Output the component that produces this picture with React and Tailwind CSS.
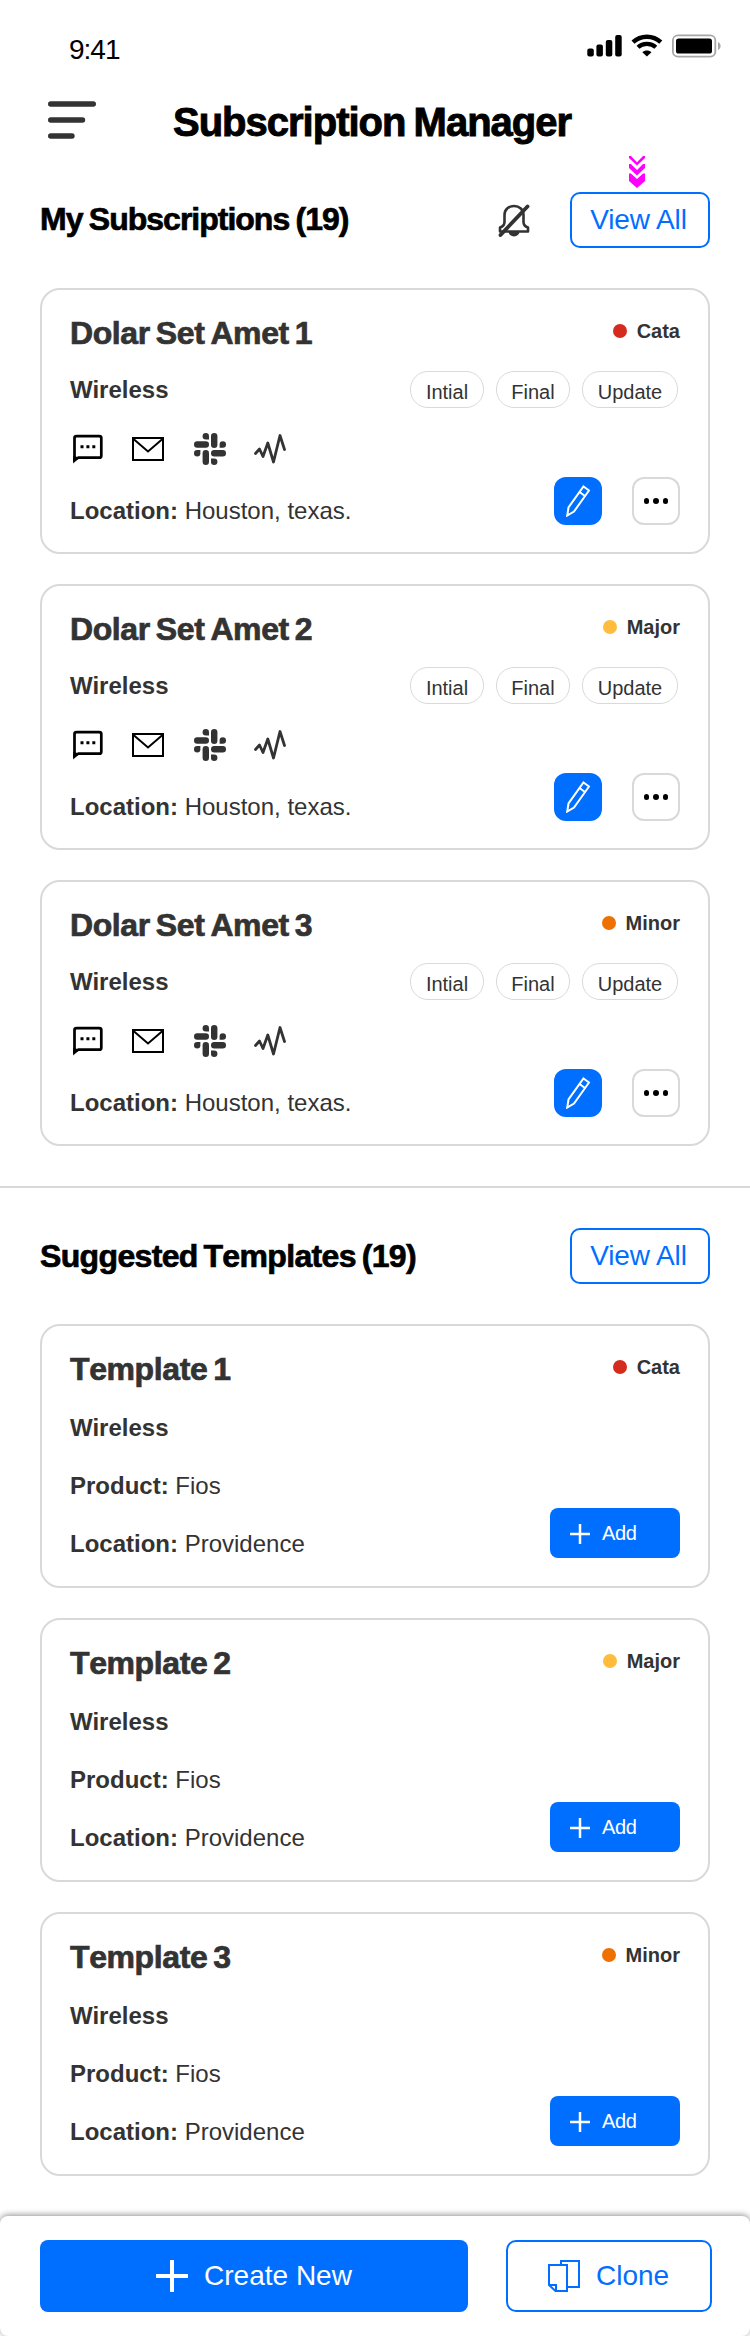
const subscriptions = [
  { title: "Dolar Set Amet 1", label: "Cata", dot: "bg-[#d52b1e]" },
  { title: "Dolar Set Amet 2", label: "Major", dot: "bg-[#ffbc3d]" },
  { title: "Dolar Set Amet 3", label: "Minor", dot: "bg-[#ed7000]" },
];

const templates = [
  { title: "Template 1", label: "Cata", dot: "bg-[#d52b1e]" },
  { title: "Template 2", label: "Major", dot: "bg-[#ffbc3d]" },
  { title: "Template 3", label: "Minor", dot: "bg-[#ed7000]" },
];

function StatusIcons() {
  return (
    <svg className="w-[136px] h-6" viewBox="0 0 136 24" fill="none">
      <rect x="0.3" y="14.6" width="6.5" height="8" rx="2" fill="#000" />
      <rect x="9.4" y="10.6" width="6.5" height="12" rx="2" fill="#000" />
      <rect x="18.8" y="6" width="6.5" height="16.6" rx="2" fill="#000" />
      <rect x="28.2" y="1" width="6.5" height="21.6" rx="2" fill="#000" />
      <path d="M46 8.200C53.800 0.900 66 0.900 73.800 8.200" stroke="#000" strokeWidth="4.4" />
      <path d="M51 13.200C55.600 8.800 64.200 8.800 68.800 13.200" stroke="#000" strokeWidth="4.2" />
      <path d="M59.900 22.600L55.300 18.200C57.800 15.800 62 15.800 64.500 18.200Z" fill="#000" />
      <rect x="85.9" y="1.300" width="42.4" height="21.4" rx="5" stroke="#a6a6a6" strokeWidth="1.8" />
      <rect x="89" y="4.500" width="36" height="15" rx="2.6" fill="#000" />
      <path d="M131 8v8c1.600-.7 2.600-2.200 2.600-4s-1-3.300-2.600-4z" fill="#a6a6a6" />
    </svg>
  );
}

function BellOff() {
  return (
    <svg className="w-8 h-[34px]" viewBox="0 0 32 34" fill="none" stroke="#333" strokeWidth="2.6">
      <path d="M6.500 19V12C6.500 6.500 10.500 3 16 3s9.500 3.500 9.500 9v7Q25.500 23 30 24.500v4H2v-4Q6.500 23 6.500 19z" strokeLinejoin="round" />
      <path d="M10.500 28.500h11a5.500 5 0 0 1-11 0z" fill="#333" stroke="none" />
      <path d="M2.500 32L29.500 3.500" strokeWidth="3.800" strokeLinecap="round" />
    </svg>
  );
}

function Chevrons() {
  return (
    <svg className="absolute left-[57px] -top-[38px] w-4 h-8" viewBox="0 0 16 32">
      <g fill="#f0f">
        <path d="M0 0h2l6 6.300L14 0h2v2L8 9.500 0 2z" />
        <path d="M0 8h2l6 6 6-6h2v4L8 19.500 0 12z" />
        <path d="M0 17.500h2l6 5.500 6-5.500h2V25l-8 7-8-7z" />
      </g>
    </svg>
  );
}

function ChannelIcons() {
  return (
    <div className="flex items-center mt-[28px] h-8 pl-[3px]">
      <svg className="w-[30px] h-[30px]" viewBox="0 0 30 30" fill="none">
        <path d="M1.500 26V4Q1.500 2.200 3.500 2.200H26.300Q28.300 2.200 28.300 4V21.700Q28.300 23.700 26.300 23.700H5.500Z" stroke="#000" strokeWidth="2.700" />
        <path d="M0.200 22v7.500l6.500-6z" fill="#000" />
        <path d="M7.500 11.300h3v3h-3zM13.400 11.300h3v3h-3zM19.300 11.300h3v3h-3z" fill="#000" />
      </svg>
      <svg className="ml-[29px] w-8 h-6" viewBox="0 0 32 24" fill="none" stroke="#000" strokeWidth="2">
        <path d="M1 1h30v22H1z" />
        <path d="M1.500 2L16 14.500 30.500 2" />
      </svg>
      <svg className="ml-[30px] w-8 h-8" viewBox="0 0 32 32" fill="#333">
        <rect x="17" y="0" width="6.400" height="15" rx="3.200" />
        <rect x="0" y="8.300" width="15" height="6.400" rx="3.200" />
        <rect x="8.600" y="17" width="6.400" height="15" rx="3.200" />
        <rect x="17" y="17" width="15" height="6.400" rx="3.200" />
        <path d="M15 6.400h-3.200A3.200 3.200 0 1 1 15 3.200z" />
        <path d="M25.600 14.700v-3.200a3.200 3.200 0 1 1 3.200 3.200z" />
        <path d="M6.400 17v3.200A3.200 3.200 0 1 1 3.200 17z" />
        <path d="M17 25.600h3.200a3.200 3.200 0 1 1-3.200 3.200z" />
      </svg>
      <svg className="ml-[28px] w-8 h-8" viewBox="0 0 32 32" fill="none" stroke="#333" strokeWidth="2.800" strokeLinecap="round" strokeLinejoin="round">
        <path d="M1.500 20.500L5.500 16l3.500 7.500L13.800 10l5.700 19L26 2.500l4.500 14" />
      </svg>
    </div>
  );
}

function Plus({ className, width }) {
  return (
    <svg className={className} viewBox="0 0 32 32" stroke="#fff" strokeWidth={width}>
      <path d="M16 0v32M0 16h32" />
    </svg>
  );
}

function Pencil() {
  return (
    <svg className="w-6 h-8" viewBox="0 0 24 32" fill="none" stroke="#fff" strokeWidth="2">
      <path d="M17.500 1.500l5.500 4L8 26.500 1.200 30.500l1.300-8z" />
      <path d="M13.500 7l5.500 4" />
    </svg>
  );
}

function ViewAll({ children }) {
  return (
    <button className="relative flex items-center justify-center pr-[3px] w-[140px] h-14 border-2 border-[#006fff] rounded-[10px] bg-white text-[28px] leading-none tracking-[-0.1px] text-[#006fff]">
      View All
      {children}
    </button>
  );
}

function Severity({ dot, label }) {
  return (
    <div className="flex items-center h-6 mt-1.5 gap-[10px] text-xl leading-6 font-bold">
      <span className={`w-[14px] h-[14px] rounded-full ${dot}`} />
      {label}
    </div>
  );
}

function Card({ className, left, right }) {
  return (
    <article className={`flex justify-between border-2 border-[#d8dada] rounded-[20px] bg-white pt-[23px] px-7 text-2xl leading-[30px] text-[#333] ${className}`}>
      <div>{left}</div>
      <div className="flex flex-col items-end">{right}</div>
    </article>
  );
}

function Title({ children }) {
  return (
    <h3 className="h-10 leading-10 text-[32px] font-bold tracking-[-0.4px] [word-spacing:-2.500px] [font-kerning:none] [-webkit-text-stroke:0.7px_#333]">
      {children}
    </h3>
  );
}

function SubscriptionCard({ item }) {
  return (
    <Card
      className="h-[266px]"
      left={
        <>
          <Title>{item.title}</Title>
          <p className="mt-[22px] font-bold">Wireless</p>
          <ChannelIcons />
          <p className="mt-[31px]"><b>Location:</b> Houston, texas.</p>
        </>
      }
      right={
        <>
          <Severity {...item} />
          <div className="flex gap-3 mt-7 mr-[2px] h-[37px] text-xl leading-[41px]">
            <span className="w-[74px] border border-[#d8dada] rounded-[18px] text-center">Intial</span>
            <span className="w-[74px] border border-[#d8dada] rounded-[18px] text-center">Final</span>
            <span className="w-[96px] border border-[#d8dada] rounded-[18px] text-center">Update</span>
          </div>
          <div className="flex gap-[30px] mt-[69px]">
            <button className="flex items-center justify-center w-12 h-12 rounded-xl bg-[#006fff]"><Pencil /></button>
            <button className="flex items-center justify-center gap-[4px] w-12 h-12 rounded-xl border-2 border-[#d8dada]">
              <span className="w-[5.5px] h-[5.5px] rounded-full bg-black" />
              <span className="w-[5.5px] h-[5.5px] rounded-full bg-black" />
              <span className="w-[5.5px] h-[5.5px] rounded-full bg-black" />
            </button>
          </div>
        </>
      }
    />
  );
}

function TemplateCard({ item }) {
  return (
    <Card
      className="h-[264px]"
      left={
        <>
          <Title>{item.title}</Title>
          <p className="mt-6 font-bold">Wireless</p>
          <p className="mt-7"><b>Product:</b> Fios</p>
          <p className="mt-7"><b>Location:</b> Providence</p>
        </>
      }
      right={
        <>
          <Severity {...item} />
          <button className="flex items-center mt-[129px] w-[130px] h-[50px] pl-5 rounded-lg bg-[#006fff] text-xl leading-none tracking-[-0.4px] text-white">
            <Plus className="w-5 h-5 mr-3 mt-0.5" width="4" />
            Add
          </button>
        </>
      }
    />
  );
}

export default function App() {
  return (
    <div className="flex flex-col w-[750px] h-[2336px] overflow-hidden bg-white text-black font-['Liberation_Sans',Arial,sans-serif]">
      <div className="flex justify-between pt-[34px] h-[92px] pl-[69px] pr-[27px]">
        <span className="text-[28px] leading-8 tracking-[-1px]">9:41</span>
        <StatusIcons />
      </div>
      <header className="flex h-[100px] pl-12">
        <svg className="mt-[9px] w-12 h-[38px]" viewBox="0 0 48 38" stroke="#333" strokeWidth="5.4" strokeLinecap="round">
          <path d="M2.700 3h42.600M2.700 19H34.500M2.700 35H24" />
        </svg>
        <h1 className="ml-[77px] mt-[6px] h-12 text-[40px] leading-[48px] font-bold tracking-[-1px] [word-spacing:-2px] [-webkit-text-stroke:0.9px_#000]">Subscription Manager</h1>
      </header>
      <section className="px-10">
        <div className="flex items-center h-14">
          <h2 className="flex-1 -mt-0.5 text-[32px] leading-10 font-bold tracking-[-1px] [word-spacing:-1.5px] [-webkit-text-stroke:0.7px_#000]">My Subscriptions (19)</h2>
          <BellOff />
          <div className="ml-[40px]">
            <ViewAll><Chevrons /></ViewAll>
          </div>
        </div>
        <div className="flex flex-col gap-[30px] mt-10">
          {subscriptions.map((s) => <SubscriptionCard key={s.title} item={s} />)}
        </div>
      </section>
      <hr className="mt-10 border-0 h-0.5 shrink-0 bg-[#d8dada]" />
      <section className="px-10 pt-10">
        <div className="flex items-center justify-between h-14">
          <h2 className="text-[32px] leading-10 font-bold tracking-[-0.65px] [word-spacing:-2.5px] [font-kerning:none] [-webkit-text-stroke:0.7px_#000]">Suggested Templates (19)</h2>
          <ViewAll />
        </div>
        <div className="flex flex-col gap-[30px] mt-10">
          {templates.map((t) => <TemplateCard key={t.title} item={t} />)}
        </div>
      </section>
      <footer className="flex mt-10 h-[120px] shrink-0 pt-6 pl-10 rounded-lg bg-white text-[28px] leading-none shadow-[0_-1px_6px_rgba(0,0,0,0.45)]">
        <button className="flex items-center justify-center w-[428px] h-[72px] rounded-lg bg-[#006fff] text-white">
          <Plus className="w-8 h-8 mr-4" width="4" />
          Create New
        </button>
        <button className="flex items-center ml-[38px] pl-10 w-[206px] h-[72px] rounded-[10px] border-2 border-[#006fff] text-[#006fff]">
          <svg className="w-8 h-8 mr-4" viewBox="0 0 32 32" fill="none" stroke="currentColor" strokeWidth="2">
            <path d="M1 5h18v26H7.500L1 25z" />
            <path d="M13 5V1h18v26H19M1 25h7v6" />
          </svg>
          Clone
        </button>
      </footer>
    </div>
  );
}
